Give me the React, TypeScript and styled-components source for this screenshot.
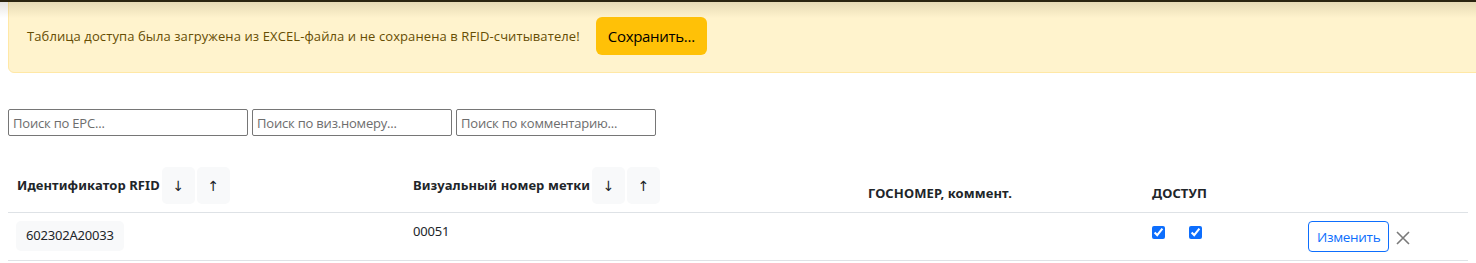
import React from "react";
import styled, { createGlobalStyle } from "styled-components";

const Global = createGlobalStyle`
  html, body { margin: 0; padding: 0; background: #fff; }
  body { font-family: "Open Sans", "Noto Sans", sans-serif; color: #212529; overflow: hidden; }
`;

const Page = styled.div`
  position: relative;
  width: 1476px;
  height: 263px;
  overflow: hidden;
  padding: 0 0 0 8px;
  box-sizing: border-box;
`;

const TopShade = styled.div`
  position: absolute;
  left: 0;
  right: 0;
  top: 0;
  height: 16px;
  border-top: 2px solid #2a2410;
  background: linear-gradient(to bottom, rgba(60, 50, 20, 0.13), rgba(60, 50, 20, 0));
  pointer-events: none;
`;

const Alert = styled.div`
  display: flex;
  align-items: center;
  gap: 16px;
  height: 74px;
  margin-top: -1px;
  margin-right: -10px;
  padding: 0 18px;
  box-sizing: border-box;
  background: #fff3cd;
  border: 1px solid #ffe8a6;
  border-radius: 0 0 0 6px;
  color: #664d03;
  font-size: 13px;
  letter-spacing: 0.1px;
`;

const SaveButton = styled.button`
  height: 38px;
  padding: 0 12px;
  border: none;
  border-radius: 6px;
  background: #ffc107;
  color: #000;
  font-family: "Open Sans", sans-serif;
  font-size: 15px;
  letter-spacing: -0.3px;
`;

const SearchRow = styled.div`
  display: flex;
  gap: 4px;
  margin-top: 36px;
`;

const SearchInput = styled.input<{ $w: number }>`
  width: ${(p) => p.$w}px;
  height: 27px;
  box-sizing: border-box;
  border: 1px solid #767676;
  border-radius: 2px;
  padding: 0 4px;
  font-family: "Open Sans", sans-serif;
  font-size: 13px;
  letter-spacing: -0.2px;
  &::placeholder { color: #6d6d6d; }
`;

const Table = styled.table`
  width: 1460px;
  table-layout: fixed;
  margin-top: 23px;
  border-collapse: collapse;
  font-family: "Noto Sans", sans-serif;
  font-size: 13px;
`;

const Th = styled.th<{ $w?: number }>`
  ${(p) => (p.$w ? `width: ${p.$w}px;` : "")}
  text-align: left;
  vertical-align: bottom;
  padding: 8px 0 8px 9px;
  border-bottom: 1px solid #dee2e6;
  font-weight: 700;
  letter-spacing: 0.1px;
  line-height: 21px;
  white-space: nowrap;
`;

const Td = styled.td`
  vertical-align: top;
  padding: 8px 0 8px 9px;
  border-bottom: 1px solid #dee2e6;
  line-height: 21px;
  letter-spacing: -0.2px;
`;

const SortButton = styled.button`
  display: inline-block;
  vertical-align: middle;
  width: 33px;
  height: 37px;
  margin-left: 2px;
  padding: 0;
  border: none;
  border-radius: 5px;
  background: #f8f9fa;
  color: #212529;
  font-family: "DejaVu Sans", sans-serif;
  font-size: 14px;
`;

const HeadLabel = styled.span`
  vertical-align: middle;
`;

const IdChip = styled.span`
  display: inline-block;
  margin-left: -1px;
  padding: 4px 10px 5px 10px;
  background: #f8f9fa;
  border-radius: 5px;
`;

const Checks = styled.div`
  display: flex;
  gap: 24px;
  padding-top: 5px;
  padding-left: 0;
`;

const Check = styled.input`
  width: 13px;
  height: 13px;
  margin: 0;
  accent-color: #0d6efd;
`;

const Actions = styled.div`
  display: flex;
  align-items: center;
  gap: 6px;
`;

const EditButton = styled.button`
  height: 31px;
  padding: 0 8px;
  border: 1px solid #0d6efd;
  border-radius: 4px;
  background: #fff;
  color: #0d6efd;
  font-family: "Open Sans", sans-serif;
  font-size: 13.5px;
  letter-spacing: -0.3px;
`;

const CloseIcon = styled.svg`
  width: 16px;
  height: 16px;
  margin-top: 2px;
`;

export default function App() {
  return (
    <>
      <Global />
      <Page>
        <Alert>
          <span>Таблица доступа была загружена из EXCEL-файла и не сохранена в RFID-считывателе!</span>
          <SaveButton>Сохранить...</SaveButton>
        </Alert>
        <SearchRow>
          <SearchInput $w={240} placeholder="Поиск по EPC..." />
          <SearchInput $w={200} placeholder="Поиск по виз.номеру..." />
          <SearchInput $w={200} placeholder="Поиск по комментарию..." />
        </SearchRow>
        <Table>
          <thead>
            <tr>
              <Th $w={387}>
                <HeadLabel>Идентификатор RFID</HeadLabel>
                <SortButton>↓</SortButton>
                <SortButton>↑</SortButton>
              </Th>
              <Th $w={446}>
                <HeadLabel>Визуальный номер метки</HeadLabel>
                <SortButton>↓</SortButton>
                <SortButton>↑</SortButton>
              </Th>
              <Th $w={275}>ГОСНОМЕР, коммент.</Th>
              <Th $w={147}>ДОСТУП</Th>
              <Th></Th>
            </tr>
          </thead>
          <tbody>
            <tr>
              <Td>
                <IdChip>602302A20033</IdChip>
              </Td>
              <Td>00051</Td>
              <Td></Td>
              <Td>
                <Checks>
                  <Check type="checkbox" defaultChecked />
                  <Check type="checkbox" defaultChecked />
                </Checks>
              </Td>
              <Td>
                <Actions>
                  <EditButton>Изменить</EditButton>
                  <CloseIcon viewBox="0 0 16 16" fill="none" stroke="#7a7a7a" strokeWidth="1.6">
                    <path d="M2 2 L14 14 M14 2 L2 14" />
                  </CloseIcon>
                </Actions>
              </Td>
            </tr>
          </tbody>
        </Table>
        <TopShade />
      </Page>
    </>
  );
}
